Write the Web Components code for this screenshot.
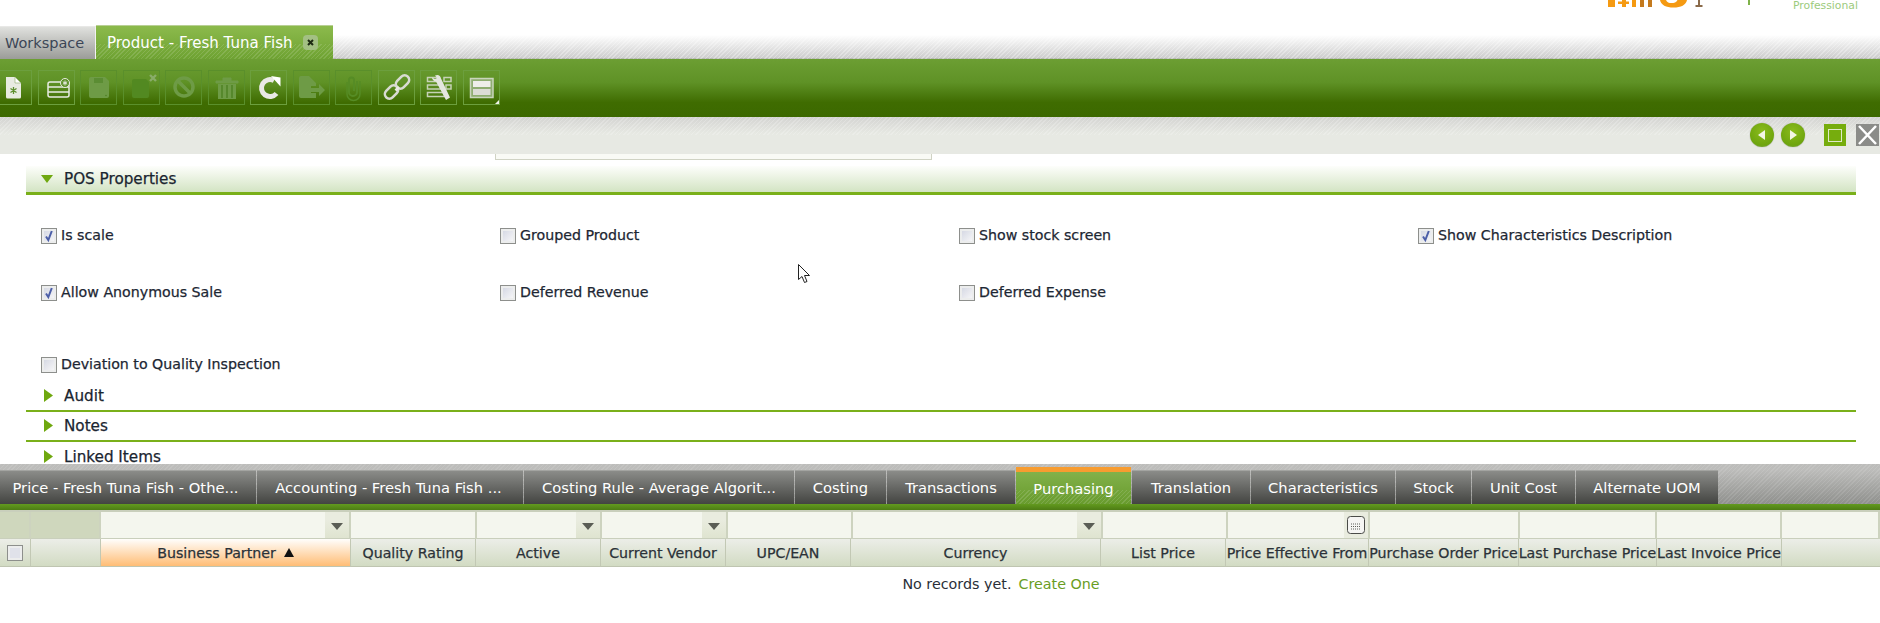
<!DOCTYPE html>
<html>
<head>
<meta charset="utf-8">
<title>Product - Fresh Tuna Fish</title>
<style>
  html, body { margin: 0; padding: 0; height: 623px; overflow: hidden; background: #fff; }
  body { font-family: "DejaVu Sans", "Liberation Sans", sans-serif; font-size: 13px; color: #1f2a35; }
  app-shell { position: relative; }
</style>
</head>
<body>
<app-shell>
  <brand-bar></brand-bar>
  <window-tabs>
    <window-tab>Workspace</window-tab>
    <window-tab active closable>Product - Fresh Tuna Fish</window-tab>
  </window-tabs>
  <main-toolbar></main-toolbar>
  <status-strip></status-strip>
  <form-area>
    <form-section open title="POS Properties">
      <check-field checked>Is scale</check-field>
      <check-field>Grouped Product</check-field>
      <check-field>Show stock screen</check-field>
      <check-field checked>Show Characteristics Description</check-field>
      <check-field checked>Allow Anonymous Sale</check-field>
      <check-field>Deferred Revenue</check-field>
      <check-field>Deferred Expense</check-field>
      <span></span>
      <check-field>Deviation to Quality Inspection</check-field>
    </form-section>
    <form-section title="Audit"></form-section>
    <form-section title="Notes"></form-section>
    <form-section title="Linked Items" last></form-section>
  </form-area>
  <child-tabs>
    <child-tab w="256" style="padding-right:5px">Price - Fresh Tuna Fish - Othe...</child-tab>
    <child-tab w="266" style="padding-right:3px">Accounting - Fresh Tuna Fish ...</child-tab>
    <child-tab w="270">Costing Rule - Average Algorit...</child-tab>
    <child-tab w="91">Costing</child-tab>
    <child-tab w="128">Transactions</child-tab>
    <child-tab w="115" active>Purchasing</child-tab>
    <child-tab w="118">Translation</child-tab>
    <child-tab w="144">Characteristics</child-tab>
    <child-tab w="75">Stock</child-tab>
    <child-tab w="103">Unit Cost</child-tab>
    <child-tab w="142">Alternate UOM</child-tab>
  </child-tabs>
  <data-grid>
    <filter-cell slot="filter" blank></filter-cell>
    <filter-cell slot="filter" blank></filter-cell>
    <filter-cell slot="filter" combo></filter-cell>
    <filter-cell slot="filter"></filter-cell>
    <filter-cell slot="filter" combo></filter-cell>
    <filter-cell slot="filter" combo></filter-cell>
    <filter-cell slot="filter"></filter-cell>
    <filter-cell slot="filter" combo></filter-cell>
    <filter-cell slot="filter"></filter-cell>
    <filter-cell slot="filter" date></filter-cell>
    <filter-cell slot="filter"></filter-cell>
    <filter-cell slot="filter"></filter-cell>
    <filter-cell slot="filter"></filter-cell>
    <filter-cell slot="filter"></filter-cell>
    <head-cell slot="head" box></head-cell>
    <head-cell slot="head"></head-cell>
    <head-cell slot="head" sorted>Business Partner</head-cell>
    <head-cell slot="head">Quality Rating</head-cell>
    <head-cell slot="head">Active</head-cell>
    <head-cell slot="head">Current Vendor</head-cell>
    <head-cell slot="head">UPC/EAN</head-cell>
    <head-cell slot="head">Currency</head-cell>
    <head-cell slot="head">List Price</head-cell>
    <head-cell slot="head">Price Effective From</head-cell>
    <head-cell slot="head">Purchase Order Price</head-cell>
    <head-cell slot="head">Last Purchase Price</head-cell>
    <head-cell slot="head">Last Invoice Price</head-cell>
    <head-cell slot="head" end></head-cell>
  </data-grid>
  <empty-note></empty-note>
  <mouse-cursor></mouse-cursor>
</app-shell>

<script>
const HATCH = "repeating-linear-gradient(135deg, rgba(255,255,255,.13) 0 1px, transparent 1px 3px) 0 100% / 100% 45% no-repeat";

class BrandBar extends HTMLElement {
  constructor() {
    super();
    this.attachShadow({ mode: "open" }).innerHTML = `
      <style>
        :host { display: block; height: 25px; position: relative; overflow: hidden; }
        .row { display: flex; justify-content: flex-end; align-items: flex-start; height: 25px; }
        svg { display: block; margin-right: 43px; }
        .pro { font: 10.8px/11px "DejaVu Sans", sans-serif; color: #9ccb7d; margin: 0 20px 0 0; width: 67px; white-space: nowrap; }
      </style>
      <div class="row">
        <svg width="142" height="8" viewBox="0 0 142 8">
          <g fill="#f59a12">
            <rect x="0" y="0" width="7" height="7"/>
            <rect x="14" y="0" width="4" height="7"/>
            <rect x="10" y="1.500" width="11" height="2.500"/>
            <rect x="24" y="0" width="4" height="7"/>
            <path d="M52 0h6c1 2.500 3 3 5.500 3s5-.5 6-3H79c-1 5-6 7.500-13.500 7.500S53 5 52 0z"/>
          </g>
          <g fill="#c47a1e">
            <rect x="32" y="0" width="4" height="7"/>
            <rect x="40" y="0" width="4" height="7"/>
          </g>
          <path d="M90 0h2v5h2.500v2h-7v-2h2.500z" fill="#8a6a4a"/>
          <rect x="140" y="0" width="2" height="5" fill="#7fb24a"/>
        </svg>
        <div class="pro">Professional</div>
      </div>`;
  }
}

class WindowTabs extends HTMLElement {
  constructor() {
    super();
    this.attachShadow({ mode: "open" }).innerHTML = `
      <style>
        :host {
          display: flex; height: 34px; align-items: flex-end;
          background:
            repeating-linear-gradient(135deg, rgba(255,255,255,.3) 0 1px, transparent 1px 3px),
            linear-gradient(#fff 0, #fff 10px, #cdcdcd 33px, #b8bab4 33px);
        }
      </style>
      <slot></slot>`;
  }
}

class WindowTab extends HTMLElement {
  constructor() {
    super();
    const active = this.hasAttribute("active");
    this.attachShadow({ mode: "open" }).innerHTML = `
      <style>
        :host {
          display: flex; align-items: center; box-sizing: border-box;
          height: ${active ? 34 : 33}px; width: ${active ? 237 : 96}px;
          padding: 0 ${active ? 15 : 0}px 0 ${active ? 11 : 5}px;
          font-size: ${active ? 15 : 14.5}px; white-space: nowrap;
          color: ${active ? "#fff" : "#3b4656"};
          border-top: 1px solid ${active ? "#b9d095" : "#e8e8e6"};
          border-right: ${active ? 0 : "1px solid #f2f2f0"};
          background: ${active
            ? HATCH + ", linear-gradient(#8cba4c, #6ea232)"
            : "linear-gradient(#e0e1de, #9b9c98)"};
        }
        .x { margin-left: auto; width: 15px; height: 15px; border-radius: 4px; background: #a3c083; display: flex; }
      </style>
      <slot></slot>
      ${this.hasAttribute("closable") ? `<span class="x"><svg width="15" height="15"><path d="M5 5l5 5M10 5l-5 5" stroke="#1d2a12" stroke-width="2"/></svg></span>` : ""}`;
  }
}

const ON = "#e8ebe2", DIM = "#6e9b46", FAINT = "#568c25";
const TOOL_ICONS = {
  newDoc: `<path d="M11 7h9l6 6v14a1.500 1.500 0 0 1-1.500 1.500h-12A1.500 1.500 0 0 1 11 27z" fill="${ON}"/><path d="M20 7l6 6h-6z" fill="#fff" stroke="#8aa86a" stroke-width=".6"/><path d="M18.500 17v7M15.500 18.500l6 4M21.500 18.500l-6 4" stroke="#5d8f2e" stroke-width="1.300"/>`,
  newRow: `<rect x="10" y="12" width="21" height="15" rx="2" fill="none" stroke="${ON}" stroke-width="1.500"/><path d="M10 17h21M10 22h21" stroke="${ON}" stroke-width="1.500"/><circle cx="27" cy="13" r="4.500" fill="#5c9028" stroke="${ON}"/><path d="M27 10.500v5M24.800 11.800l4.400 2.400M29.200 11.800l-4.400 2.400" stroke="${ON}" stroke-width="1"/>`,
  save: `<path d="M9 9a2 2 0 0 1 2-2h14l4 4v15a2 2 0 0 1-2 2H11a2 2 0 0 1-2-2z" fill="${DIM}"/><rect x="14" y="8" width="9" height="5" fill="#5b8d33"/><circle cx="26" cy="25.500" r=".8" fill="#4f8125"/>`,
  saveClose: `<path d="M9 11a2 2 0 0 1 2-2h12l3 3v14a2 2 0 0 1-2 2H11a2 2 0 0 1-2-2z" fill="#528921"/><path d="M27 5l6 6M33 5l-6 6" stroke="#89ac69" stroke-width="2.400"/>`,
  cancel: `<circle cx="19" cy="17" r="9" fill="none" stroke="${DIM}" stroke-width="3.500"/><path d="M12.500 10.500l13 13" stroke="${DIM}" stroke-width="3.500"/>`,
  trash: `<path d="M8 11h22v2H8zM15 11V8h8v3" fill="${DIM}" stroke="${DIM}"/><path d="M10 14h18v15H10z" fill="${DIM}"/><path d="M14 15v13M19 15v13M24 15v13" stroke="#4f8324" stroke-width="1.500"/>`,
  refresh: `<path d="M26.500 23.500A8.500 8.500 0 1 1 24 10.500" fill="none" stroke="#e9e9e6" stroke-width="5"/><path d="M21 6l9.500 1.500V16.500z" fill="#fff"/>`,
  exportDoc: `<path d="M6 8a2 2 0 0 1 2-2h8l7 7v3h-5v7h5v5H8a2 2 0 0 1-2-2z" fill="${DIM}"/><path d="M18 18h8v-4l6 6-6 6v-4h-8z" fill="${DIM}"/>`,
  clip: `<path d="M22 12v11a4 4 0 0 1-8 0V11a2.500 2.500 0 0 1 5 0v11" transform="translate(0 -1)" fill="none" stroke="${FAINT}" stroke-width="2"/><path d="M25 11v13a6.500 6.500 0 0 1-13 0V12" fill="none" stroke="${FAINT}" stroke-width="1.500"/>`,
  link: `<g fill="none" stroke="#d8dbd2" stroke-width="2.600"><rect x="20" y="4.500" width="9" height="15" rx="4.500" transform="rotate(45 24.500 12)"/><rect x="9" y="14.500" width="9" height="15" rx="4.500" transform="rotate(45 13.500 22)"/></g><path d="M17.500 20.500l3.500-3.500" stroke="#e8eae2" stroke-width="2.600"/>`,
  params: `<g fill="none" stroke="#c6d2b6" stroke-width="1.500"><rect x="7.500" y="7.500" width="11" height="4"/><rect x="24" y="7.500" width="7" height="4"/><rect x="7.500" y="15" width="13" height="4"/><rect x="26" y="15" width="5" height="4"/><rect x="7.500" y="22.500" width="17" height="4"/></g><path d="M15 5.500c3-1.500 5.500 0 6 3l9 19-4 2.500-10-18.500c-2 0-4-2-4-4l3 1.500 2-1z" fill="#e4e6df"/>`,
  layout: `<rect x="7.500" y="8.500" width="22.500" height="19" fill="#8fad72" stroke="#c9d5bc" stroke-width="1.500"/><rect x="10" y="11" width="17.500" height="6" fill="#eeeeea"/><rect x="10" y="19" width="17.500" height="6" fill="#dcdcd6"/>`
};

class ToolButton extends HTMLElement {
  constructor() {
    super();
    const off = this.hasAttribute("off");
    this.attachShadow({ mode: "open" }).innerHTML = `
      <style>
        :host {
          display: block; width: 37px; height: 35px; box-sizing: border-box; position: relative;
          border: 1px solid ${off ? "#5a8f2b" : "#6c9f3e"};
        }
        svg { display: block; margin: -1px; }
        .menu { position: absolute; right: 0; bottom: 0; width: 0; height: 0; border: 2px solid transparent; border-right-color: #eef2e8; border-bottom-color: #eef2e8; }
      </style>
      <svg width="37" height="35" viewBox="0 0 37 35">${TOOL_ICONS[this.getAttribute("icon")]}</svg>
      ${this.hasAttribute("menu") ? `<span class="menu"></span>` : ""}`;
  }
}

class MainToolbar extends HTMLElement {
  constructor() {
    super();
    const btn = (icon, extra = "") => `<tool-button icon="${icon}" ${extra}></tool-button>`;
    this.attachShadow({ mode: "open" }).innerHTML = `
      <style>
        :host {
          display: flex; gap: 5.500px; box-sizing: border-box; height: 58px;
          padding: 11px 0 0 0; overflow: hidden;
          background: linear-gradient(#6c9e33 0, #5f9226 40%, #3f6c01 75%, #3c6900 100%);
        }
        .lead { margin-left: -5px; }
      </style>
      <tool-button class="lead" icon="newDoc"></tool-button>
      ${btn("newRow")}${btn("save", "off")}${btn("saveClose", "off")}${btn("cancel", "off")}${btn("trash", "off")}
      ${btn("refresh")}${btn("exportDoc", "off")}${btn("clip", "off")}${btn("link")}${btn("params")}${btn("layout", "menu")}`;
  }
}

class StatusStrip extends HTMLElement {
  constructor() {
    super();
    this.attachShadow({ mode: "open" }).innerHTML = `
      <style>
        :host {
          display: flex; align-items: center; box-sizing: border-box; height: 37px; padding: 0 1px 1px 0; justify-content: flex-end;
          background:
            repeating-linear-gradient(135deg, rgba(255,255,255,.2) 0 1px, transparent 1px 3px) 0 0 / 100% 18px no-repeat,
            linear-gradient(#d4d4d2 0, #e7e9e3 17px, #e7e9e3 100%);
        }
        .nav { width: 24px; height: 24px; border-radius: 50%; background: radial-gradient(circle at 50% 35%, #8abb1c, #6ea50e 70%, #86a070 100%); display: flex; align-items: center; justify-content: center; box-shadow: 0 0 1px #777; }
        .nav + .nav { margin-left: 7px; }
        .max { width: 22px; height: 22px; background: #76ad0d; margin-left: 19px; display: flex; align-items: center; justify-content: center; }
        .max i { display: block; width: 12px; height: 11px; border: 1px solid #dfe9c8; }
        .close { width: 23px; height: 22px; background: #8b8c89; margin-left: 10px; }
        svg { display: block; }
      </style>
      <span class="nav"><svg width="10" height="10"><path d="M8 0v10L1 5z" fill="#f3f6e6"/></svg></span>
      <span class="nav"><svg width="10" height="10"><path d="M2 0v10l7-5z" fill="#f3f6e6"/></svg></span>
      <span class="max"><i></i></span>
      <span class="close"><svg width="23" height="22"><path d="M3 2l17 18M20 2L3 20" stroke="#fff" stroke-width="2.500"/></svg></span>`;
  }
}

class FormArea extends HTMLElement {
  constructor() {
    super();
    this.attachShadow({ mode: "open" }).innerHTML = `
      <style>
        :host { display: block; height: 310px; overflow: hidden; padding: 0 24px 0 26px; }
        .stub { margin-left: 469px; width: 435px; height: 5px; background: #f9faf5; border: 1px solid #d0d3c4; border-top: 0; margin-bottom: 6px; }
      </style>
      <div class="stub"></div>
      <slot></slot>`;
  }
}

class FormSection extends HTMLElement {
  constructor() {
    super();
    const open = this.hasAttribute("open");
    const last = this.hasAttribute("last");
    this.attachShadow({ mode: "open" }).innerHTML = `
      <style>
        :host { display: block; }
        .head {
          display: flex; align-items: center; box-sizing: border-box;
          height: ${open ? 29 : 30}px; padding: 0 0 1px 15px;
          font-size: 15.200px; color: #1a2530; -webkit-text-stroke: .25px #1a2530;
          ${last ? "" : "border-bottom: 2px solid #7ab01a;"}
          ${open ? "background: linear-gradient(#fdfefb, #d3e4c3); border-bottom-width: 3px;" : ""}
        }
        svg { display: block; margin-right: 11px; }
        .body {
          display: grid; grid-template-columns: repeat(4, 459px);
          grid-template-rows: 57px 72px 25px; padding: 33px 0 0 15px;
        }
      </style>
      <div class="head">
        ${open
          ? `<svg width="12" height="8"><path d="M0 0h12L6 8z" fill="#6fa80f"/></svg>`
          : `<svg width="12" height="13" style="margin-left:2px;margin-right:9px"><path d="M1 0l9 6.500L1 13z" fill="#6fa80f"/></svg>`}
        <span>${this.getAttribute("title")}</span>
      </div>
      ${open ? `<div class="body"><slot></slot></div>` : ""}`;
  }
}

class CheckField extends HTMLElement {
  constructor() {
    super();
    this.attachShadow({ mode: "open" }).innerHTML = `
      <style>
        :host { display: flex; align-items: flex-start; gap: 4px; font-size: 14.200px; line-height: 14px; white-space: nowrap; color: #1d2733; -webkit-text-stroke: .25px #1d2733; }
        svg { display: block; flex: none; }
      </style>
      <svg width="16" height="16" viewBox="0 0 16 16">
        <defs><linearGradient id="g" x1="0" y1="0" x2="1" y2="1"><stop offset="0" stop-color="#d6d9e4"/><stop offset="1" stop-color="#f5f5f7"/></linearGradient></defs>
        <rect x=".5" y=".5" width="15" height="15" fill="#eceded" stroke="#8d8f8c"/>
        <rect x="3" y="3" width="10" height="10" fill="url(#g)"/>
        ${this.hasAttribute("checked") ? `<path d="M5 8.500l2.300 3.500 3.500-9" fill="none" stroke="#4c5fa8" stroke-width="2"/>` : ""}
      </svg>
      <span><slot></slot></span>`;
  }
}

class ChildTabs extends HTMLElement {
  constructor() {
    super();
    this.attachShadow({ mode: "open" }).innerHTML = `
      <style>
        :host {
          display: block; height: 46px;
          background:
            repeating-linear-gradient(135deg, rgba(255,255,255,.1) 0 1px, transparent 1px 3px),
            linear-gradient(#bdbdbb 0, #bcbcba 6px, #8f908d 40px);
        }
        .row { display: flex; gap: 1px; height: 40px; align-items: flex-end; }
        .bar { height: 6px; background: linear-gradient(#629a1f, #4d7c14); }
      </style>
      <div class="row"><slot></slot></div>
      <div class="bar"></div>`;
  }
}

class ChildTab extends HTMLElement {
  constructor() {
    super();
    const active = this.hasAttribute("active");
    this.attachShadow({ mode: "open" }).innerHTML = `
      <style>
        :host {
          display: flex; align-items: center; justify-content: center; box-sizing: border-box;
          width: ${this.getAttribute("w")}px; height: ${active ? 37 : 34}px;
          font-size: 14.700px; color: #fff; white-space: nowrap;
          ${active
            ? `border-top: 5px solid #f79c30; background: ${HATCH}, linear-gradient(#82b14a, #689b2d);`
            : "border-top: 1px solid #a3a4a1; background: linear-gradient(#8b8c89, #434441);"}
        }
      </style>
      <slot></slot>`;
  }
}

class DataGrid extends HTMLElement {
  constructor() {
    super();
    this.attachShadow({ mode: "open" }).innerHTML = `
      <style>
        :host { display: block; height: 57px; box-sizing: border-box; padding-top: 2px; background: #c9cfbc; }
        .filters, .heads { display: grid; }
        .filters { height: 27px; grid-template-columns: 31px 70px 250px 126px 125px 126px 125px 250px 125px 142px 150px 137px 125px 1fr; }
        .heads { height: 28px; grid-template-columns: 31px 70px 250px 125px 125px 125px 125px 250px 125px 143px 150px 138px 125px 1fr; }
      </style>
      <div class="filters"><slot name="filter"></slot></div>
      <div class="heads"><slot name="head"></slot></div>`;
  }
}

class FilterCell extends HTMLElement {
  constructor() {
    super();
    const trigger = this.hasAttribute("combo")
      ? `<span class="btn"><svg width="12" height="7"><path d="M0 0h12L6 7z" fill="#5a5d55"/></svg></span>`
      : this.hasAttribute("date")
      ? `<span class="btn date"><svg width="18" height="18" viewBox="0 0 18 18"><rect x=".5" y=".5" width="17" height="17" rx="3" fill="#f5f5f3" stroke="#4a4b48"/><path d="M4 8h10M4 10.500h10M4 13h10" stroke="#5d5e5a" stroke-dasharray="1 1"/></svg></span>`
      : "";
    this.attachShadow({ mode: "open" }).innerHTML = `
      <style>
        :host {
          display: flex; justify-content: flex-end; box-sizing: border-box; min-width: 0;
          border-right: 2px solid #cdd3bf; border-bottom: 1px solid #c9cfbc;
          background: ${this.hasAttribute("blank") ? "#cfd7bd" : "#f4f6ee"};
        }
        .btn { width: 24px; box-sizing: border-box; background: linear-gradient(#e9ecdf 0, #e9ecdf 30%, #dfe4d0); display: flex; align-items: center; justify-content: center; padding-top: 2px; }
        .date { background: #e9ecdf; padding: 0; }
      </style>
      ${trigger}`;
  }
}

class HeadCell extends HTMLElement {
  constructor() {
    super();
    const sorted = this.hasAttribute("sorted");
    const box = this.hasAttribute("box");
    this.attachShadow({ mode: "open" }).innerHTML = `
      <style>
        :host {
          display: flex; align-items: center; justify-content: center; box-sizing: border-box; min-width: 0;
          font-size: 14.200px; color: #2b3238; -webkit-text-stroke: .25px #2b3238; white-space: nowrap; overflow: hidden;
          border-bottom: 1px solid #bfc5b1;
          ${this.hasAttribute("end") ? "" : "border-right: 1px solid #c2c8b4;"}
          background: ${sorted ? "linear-gradient(#fffefc, #ffbd75)" : "linear-gradient(#eceee8, #d2dbc3)"};
        }
        svg { display: block; margin-left: 8px; }
      </style>
      ${box ? `<svg style="margin:0" width="16" height="16"><rect x=".5" y=".5" width="15" height="15" fill="#eceded" stroke="#8d8f8c"/><rect x="3" y="3" width="10" height="10" fill="#e0e2ea"/></svg>` : ""}
      <slot></slot>
      ${sorted ? `<svg width="10" height="9"><path d="M5 0l5 9H0z" fill="#111"/></svg>` : ""}`;
  }
}

class EmptyNote extends HTMLElement {
  constructor() {
    super();
    this.attachShadow({ mode: "open" }).innerHTML = `
      <style>
        :host { display: flex; justify-content: center; gap: 7px; padding: 9px 0 0 122px; font-size: 14.300px; line-height: 16px; color: #2a2f38; }
        a { color: #6a9d1f; text-decoration: none; }
      </style>
      <span>No records yet.</span><a>Create One</a>`;
  }
}

class MouseCursor extends HTMLElement {
  constructor() {
    super();
    this.attachShadow({ mode: "open" }).innerHTML = `
      <style>
        :host { position: absolute; left: 798px; top: 264px; display: block; }
        svg { display: block; }
      </style>
      <svg width="14" height="20" viewBox="0 0 14 20">
        <path d="M.5.500v15l3.500-3 2.500 6 2.500-1-2.500-6h5z" fill="#fff" stroke="#222" stroke-width="1"/>
      </svg>`;
  }
}

class AppShell extends HTMLElement {
  constructor() {
    super();
    this.attachShadow({ mode: "open" }).innerHTML = `
      <style>:host { display: block; height: 623px; overflow: hidden; }</style>
      <slot></slot>`;
  }
}

customElements.define("app-shell", AppShell);
customElements.define("brand-bar", BrandBar);
customElements.define("window-tabs", WindowTabs);
customElements.define("window-tab", WindowTab);
customElements.define("tool-button", ToolButton);
customElements.define("main-toolbar", MainToolbar);
customElements.define("status-strip", StatusStrip);
customElements.define("form-area", FormArea);
customElements.define("form-section", FormSection);
customElements.define("check-field", CheckField);
customElements.define("child-tabs", ChildTabs);
customElements.define("child-tab", ChildTab);
customElements.define("data-grid", DataGrid);
customElements.define("filter-cell", FilterCell);
customElements.define("head-cell", HeadCell);
customElements.define("empty-note", EmptyNote);
customElements.define("mouse-cursor", MouseCursor);
</script>
</body>
</html>
